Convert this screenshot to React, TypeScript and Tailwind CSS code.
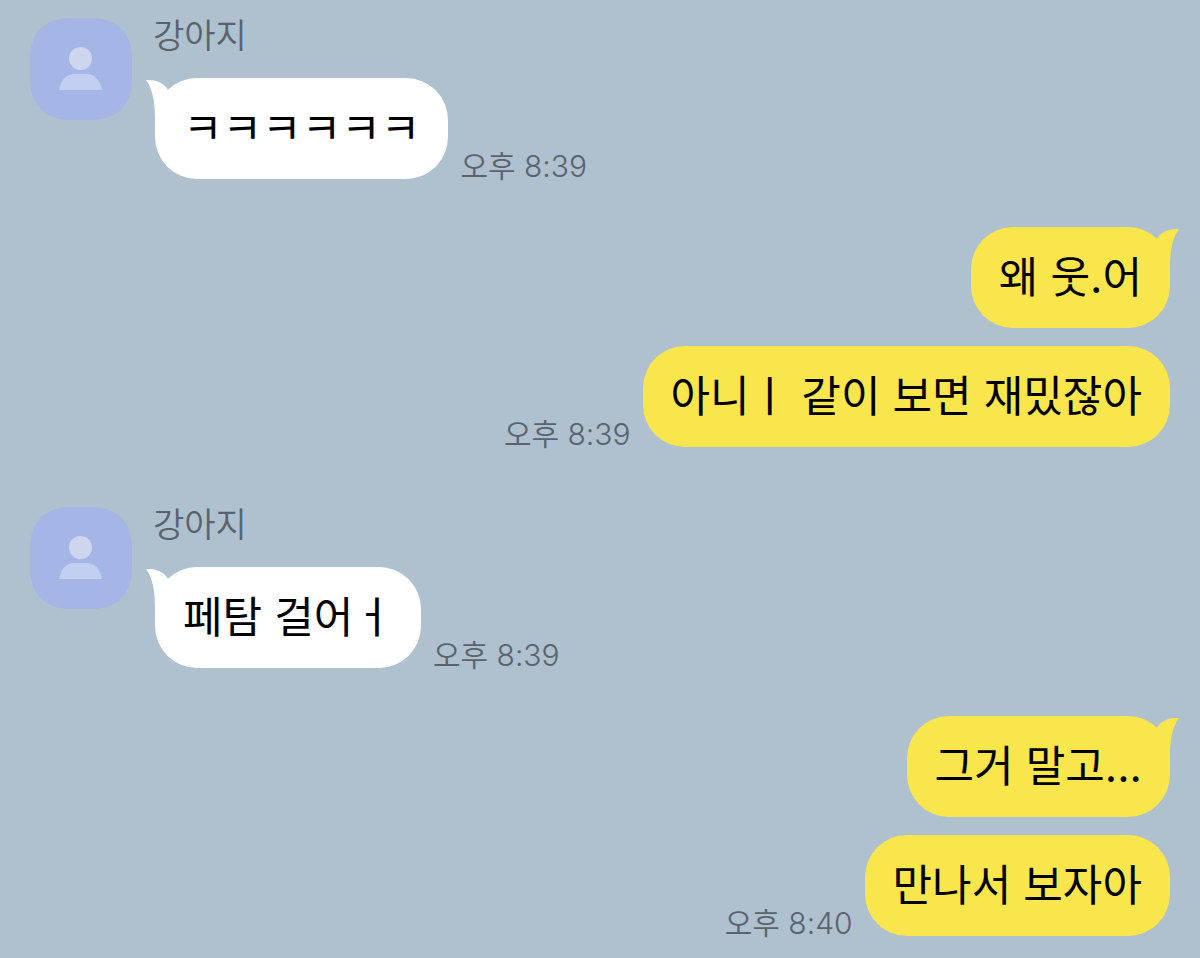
import React from "react";

type Message = { text: string; tail?: boolean; time?: string };

function Avatar() {
  return (
    <svg viewBox="0 0 102 102" className="size-[102px] shrink-0" role="img" aria-label="프로필">
      <path
        d="M41 0H61C87 0 102 15 102 41V61C102 87 87 102 61 102H41C15 102 0 87 0 61V41C0 15 15 0 41 0Z"
        fill="#a5b5e5"
      />
      <circle cx="50.500" cy="40.500" r="11.500" fill="#cdd5ef" />
      <path d="M29 72C31 62 36 56 45 56H56C65 56 70 62 72 72Z" fill="#c3cff0" />
    </svg>
  );
}

function Tail({ mine }: { mine: boolean }) {
  return (
    <svg
      viewBox="0 0 30 40"
      aria-hidden="true"
      className={
        mine
          ? "absolute top-0.5 -right-[9px] h-10 w-[30px] -scale-x-100 text-[#f9e64c]"
          : "absolute top-0.5 -left-[9px] h-10 w-[30px] text-white"
      }
    >
      <path d="M0 0C10 -0.500 18 3 21.500 9L30 20L9 40C9 22 7 10 0 0Z" fill="currentColor" />
    </svg>
  );
}

function Bubble({ message, mine }: { message: Message; mine: boolean }) {
  return (
    <div className={mine ? "flex flex-row-reverse items-end gap-3" : "flex items-end gap-3 pl-0.5"}>
      <p
        className={
          mine
            ? "relative rounded-[42px] bg-[#f9e64c] px-7 py-5 text-[43px] leading-[61px] whitespace-nowrap text-black"
            : "relative rounded-[42px] bg-white px-7 py-5 text-[43px] leading-[61px] whitespace-nowrap text-black"
        }
      >
        {message.tail && <Tail mine={mine} />}
        <span className="relative">{message.text}</span>
      </p>
      {message.time && (
        <time className="text-[30px] leading-[26px] font-[350] whitespace-nowrap text-[#59636d]">
          {message.time}
        </time>
      )}
    </div>
  );
}

function Received({ name, messages }: { name: string; messages: Message[] }) {
  return (
    <section className="flex gap-[21px]">
      <Avatar />
      <div>
        <h2 className="mb-6 text-[34px] leading-9 font-[350] text-[#59636d]">{name}</h2>
        {messages.map((m) => (
          <Bubble key={m.text} message={m} mine={false} />
        ))}
      </div>
    </section>
  );
}

function Sent({ messages }: { messages: Message[] }) {
  return (
    <section className="flex flex-col gap-[18px]">
      {messages.map((m) => (
        <Bubble key={m.text} message={m} mine />
      ))}
    </section>
  );
}

export default function App() {
  return (
    <main
      lang="ko"
      className="flex min-h-screen flex-col bg-[#afc0cf] px-[30px] pt-[18px] pb-5 [font-family:Inter,'Noto_Sans_CJK_KR',sans-serif]"
    >
      <Received name="강아지" messages={[{ text: "ㅋㅋㅋㅋㅋㅋ", tail: true, time: "오후 8:39" }]} />
      <div className="mt-12 mb-15">
        <Sent
          messages={[
            { text: "왜 웃.어", tail: true },
            { text: "아니ㅣ 같이 보면 재밌잖아", time: "오후 8:39" },
          ]}
        />
      </div>
      <Received name="강아지" messages={[{ text: "페탐 걸어ㅓ", tail: true, time: "오후 8:39" }]} />
      <div className="mt-12">
        <Sent
          messages={[
            { text: "그거 말고...", tail: true },
            { text: "만나서 보자아", time: "오후 8:40" },
          ]}
        />
      </div>
    </main>
  );
}
